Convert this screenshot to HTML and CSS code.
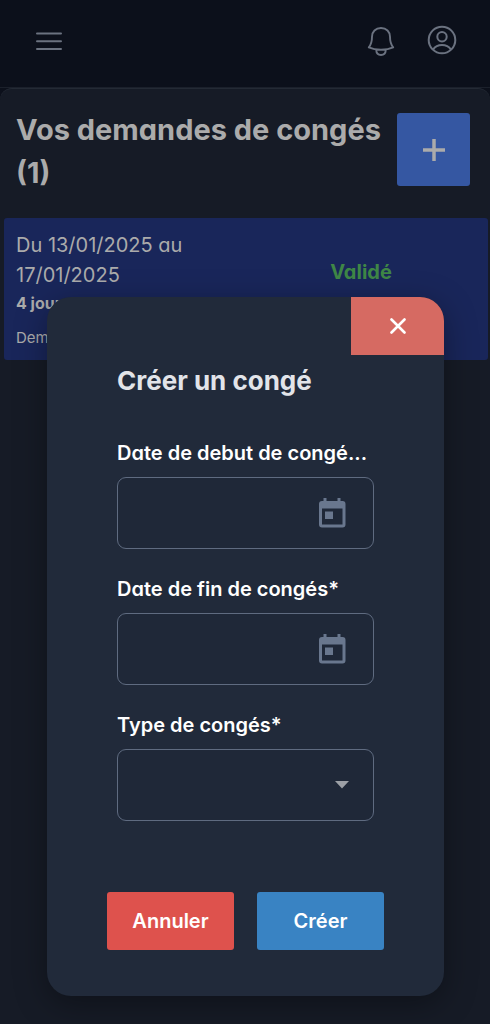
FILE: index.html
```html
<!DOCTYPE html>
<html lang="fr">
<head>
  <meta charset="utf-8">
  <meta name="viewport" content="width=device-width, initial-scale=1">
  <title>Vos demandes de congés</title>
  <link rel="stylesheet" href="styles.css">
</head>
<body>
  <header class="topbar">
    <button class="icon-button" type="button" aria-label="Menu">
      <svg width="28" height="28" viewBox="0 0 28 28" fill="none" stroke="currentColor" stroke-width="2" stroke-linecap="round"><path d="M2 6.500h24M2 14.300h24M2 22h24"/></svg>
    </button>
    <div class="topbar-actions">
      <button class="icon-button" type="button" aria-label="Notifications">
        <svg width="28" height="32" viewBox="0 0 28 32" fill="none" stroke="currentColor" stroke-width="1.900" stroke-linejoin="round" stroke-linecap="round"><path d="M14 3C8.600 3 5 6.700 5 11.800C5 17 4 19.800 1.800 22.400C5.500 24.200 10 24.800 14 24.800S22.500 24.200 26.200 22.400C24 19.800 23 17 23 11.800C23 6.700 19.400 3 14 3ZM9.200 25C9.400 28.200 11.300 30 14 30S18.600 28.200 18.800 25"/></svg>
      </button>
      <button class="icon-button" type="button" aria-label="Profil">
        <svg width="30" height="30" viewBox="0 0 30 30" fill="none" stroke="currentColor" stroke-width="2"><circle cx="15" cy="15" r="13.300"/><circle cx="15" cy="11.800" r="4.700"/><path d="M6 24.600C8 21.700 11.200 20 15 20S22 21.700 24 24.600"/></svg>
      </button>
    </div>
  </header>

  <main class="page">
    <div class="page-head">
      <h1 class="page-title">Vos demandes de congés (1)</h1>
      <button class="add-button" type="button" aria-label="Ajouter un congé">
        <svg width="22" height="22" viewBox="0 0 22 22" fill="none" stroke="currentColor" stroke-width="3.500"><path d="M11 0v22M0 11h22"/></svg>
      </button>
    </div>
    <article class="request">
      <div class="request-info">
        <p class="request-dates">Du 13/01/2025 au 17/01/2025</p>
        <p class="request-days">4 jours</p>
        <p class="request-note">Demande</p>
      </div>
      <p class="request-status">Validé</p>
    </article>
  </main>

  <div class="overlay">
    <section class="dialog" role="dialog" aria-modal="true" aria-labelledby="dialog-title">
      <button class="close-button" type="button" aria-label="Fermer">
        <svg width="16" height="16" viewBox="0 0 16 16" fill="none" stroke="currentColor" stroke-width="2.600" stroke-linecap="round"><path d="M1.500 1.500l13 13M14.500 1.500l-13 13"/></svg>
      </button>
      <form class="form">
        <h2 class="dialog-title" id="dialog-title">Créer un congé</h2>
        <div class="fields">
          <div class="field">
            <label class="label" for="start">Date de debut de congé...</label>
            <div class="control">
              <input class="input" id="start" type="text">
              <button class="calendar-button" type="button" aria-label="Choisir la date de début">
                <svg width="28" height="30" viewBox="0 0 28 30"><path fill="currentColor" fill-rule="evenodd" d="M5.500 0h3v3h11V0h3v3H24.500Q27.500 3 27.500 6V26.500Q27.500 29.500 24.500 29.500H4Q1 29.500 1 26.500V6Q1 3 4 3H5.500ZM4 10.500v16h20.500v-16ZM7 13.500h8v7.500H7Z"/></svg>
              </button>
            </div>
          </div>
          <div class="field">
            <label class="label" for="end">Date de fin de congés*</label>
            <div class="control">
              <input class="input" id="end" type="text">
              <button class="calendar-button" type="button" aria-label="Choisir la date de fin">
                <svg width="28" height="30" viewBox="0 0 28 30"><path fill="currentColor" fill-rule="evenodd" d="M5.500 0h3v3h11V0h3v3H24.500Q27.500 3 27.500 6V26.500Q27.500 29.500 24.500 29.500H4Q1 29.500 1 26.500V6Q1 3 4 3H5.500ZM4 10.500v16h20.500v-16ZM7 13.500h8v7.500H7Z"/></svg>
              </button>
            </div>
          </div>
          <div class="field">
            <label class="label" for="type">Type de congés*</label>
            <div class="control">
              <select class="input" id="type"></select>
              <svg class="caret" width="14" height="8" viewBox="0 0 14 8"><path fill="currentColor" d="M0 0h14L7 7.500Z"/></svg>
            </div>
          </div>
        </div>
        <div class="actions">
          <button class="action action-cancel" type="button">Annuler</button>
          <button class="action action-create" type="submit">Créer</button>
        </div>
      </form>
    </section>
  </div>
</body>
</html>
```

FILE: styles.css
```css
* {
  box-sizing: border-box;
}

body {
  margin: 0;
  min-height: 100vh;
  display: flex;
  flex-direction: column;
  background: #0c101b;
  color: #ababab;
  font-family: Inter, "Liberation Sans", sans-serif;
  font-feature-settings: "cv11";
}

h1, h2, p {
  margin: 0;
}

button {
  padding: 0;
  border: 0;
  font: inherit;
  font-feature-settings: inherit;
  cursor: pointer;
}

svg {
  display: block;
}

.topbar {
  display: flex;
  align-items: center;
  justify-content: space-between;
  height: 88px;
  padding: 0 33px 6px 35px;
  border-bottom: 1px solid #1b202b;
}

.topbar-actions {
  display: flex;
  align-items: flex-start;
  gap: 32px;
}

.icon-button {
  background: none;
  color: #6b7280;
}

.page {
  flex: 1;
  padding: 24px 2px 0 4px;
  border-top: 1px solid #242a35;
  border-radius: 12px 12px 0 0;
  background: #161b26;
}

.page-head {
  display: flex;
  align-items: flex-start;
  justify-content: space-between;
  gap: 8px;
  padding: 0 18px 24px 12px;
}

.page-title {
  margin-top: -5px;
  font-size: 29px;
  line-height: 43px;
  font-weight: 700;
}

.add-button {
  display: grid;
  place-items: center;
  flex: none;
  width: 73px;
  height: 73px;
  border-radius: 3px;
  background: #3557a2;
  color: #ababab;
}

.request {
  display: grid;
  grid-template-columns: 1fr 1fr;
  padding: 12px 12px 10px;
  border-radius: 3px;
  background: #19265a;
}

.request-dates {
  max-width: 200px;
  font-size: 20px;
  line-height: 30px;
}

.request-days {
  font-size: 16px;
  line-height: 26px;
  font-weight: 700;
}

.request-note {
  padding-top: 10px;
  font-size: 15px;
  line-height: 24px;
}

.request-status {
  padding-top: 27px;
  text-align: center;
  font-size: 20px;
  line-height: 30px;
  font-weight: 700;
  color: #3f8746;
}

.overlay {
  position: absolute;
  inset: 0;
  display: flex;
  align-items: flex-end;
  padding: 28px 46px 28px 47px;
}

.dialog {
  display: flex;
  flex-direction: column;
  flex: 1;
  min-width: 0;
  overflow: hidden;
  border-radius: 24px;
  background: #212a3a;
  box-shadow: 0 8px 32px rgba(0, 0, 0, 0.35);
}

.close-button {
  display: grid;
  place-items: center;
  align-self: flex-end;
  width: 93px;
  height: 58px;
  background: #d66a62;
  color: #ffffff;
}

.form {
  padding: 8px 60px 46px;
}

.dialog-title {
  padding: 0 10px;
  font-size: 26px;
  line-height: 36px;
  font-weight: 700;
  color: #e2e4e9;
}

.fields {
  display: grid;
  grid-template-columns: minmax(0, 1fr);
  gap: 24px;
  padding: 38px 10px 71px;
}

.field {
  display: grid;
  grid-template-columns: minmax(0, 1fr);
  gap: 8px;
}

.label {
  overflow: hidden;
  font-size: 20px;
  line-height: 32px;
  font-weight: 600;
  white-space: nowrap;
  color: #ffffff;
}

.control {
  display: flex;
  align-items: center;
  height: 72px;
  padding: 0 24px 0 16px;
  border: 1px solid #5f6b80;
  border-radius: 9px;
  background: #1f2838;
}

.input {
  flex: 1;
  min-width: 0;
  height: 100%;
  padding: 0;
  border: 0;
  outline: 0;
  appearance: none;
  background: transparent;
  color: #ffffff;
  font: inherit;
  font-size: 20px;
}

.calendar-button {
  flex: none;
  margin-right: 3px;
  background: none;
  color: #69778e;
}

.caret {
  flex: none;
  color: #9ca0a6;
}

.actions {
  display: grid;
  grid-template-columns: 1fr 1fr;
  gap: 23px;
}

.action {
  height: 58px;
  border-radius: 3px;
  font-size: 20px;
  font-weight: 600;
  color: #ffffff;
}

.action-cancel {
  background: #de524d;
}

.action-create {
  background: #3983c3;
}
```
